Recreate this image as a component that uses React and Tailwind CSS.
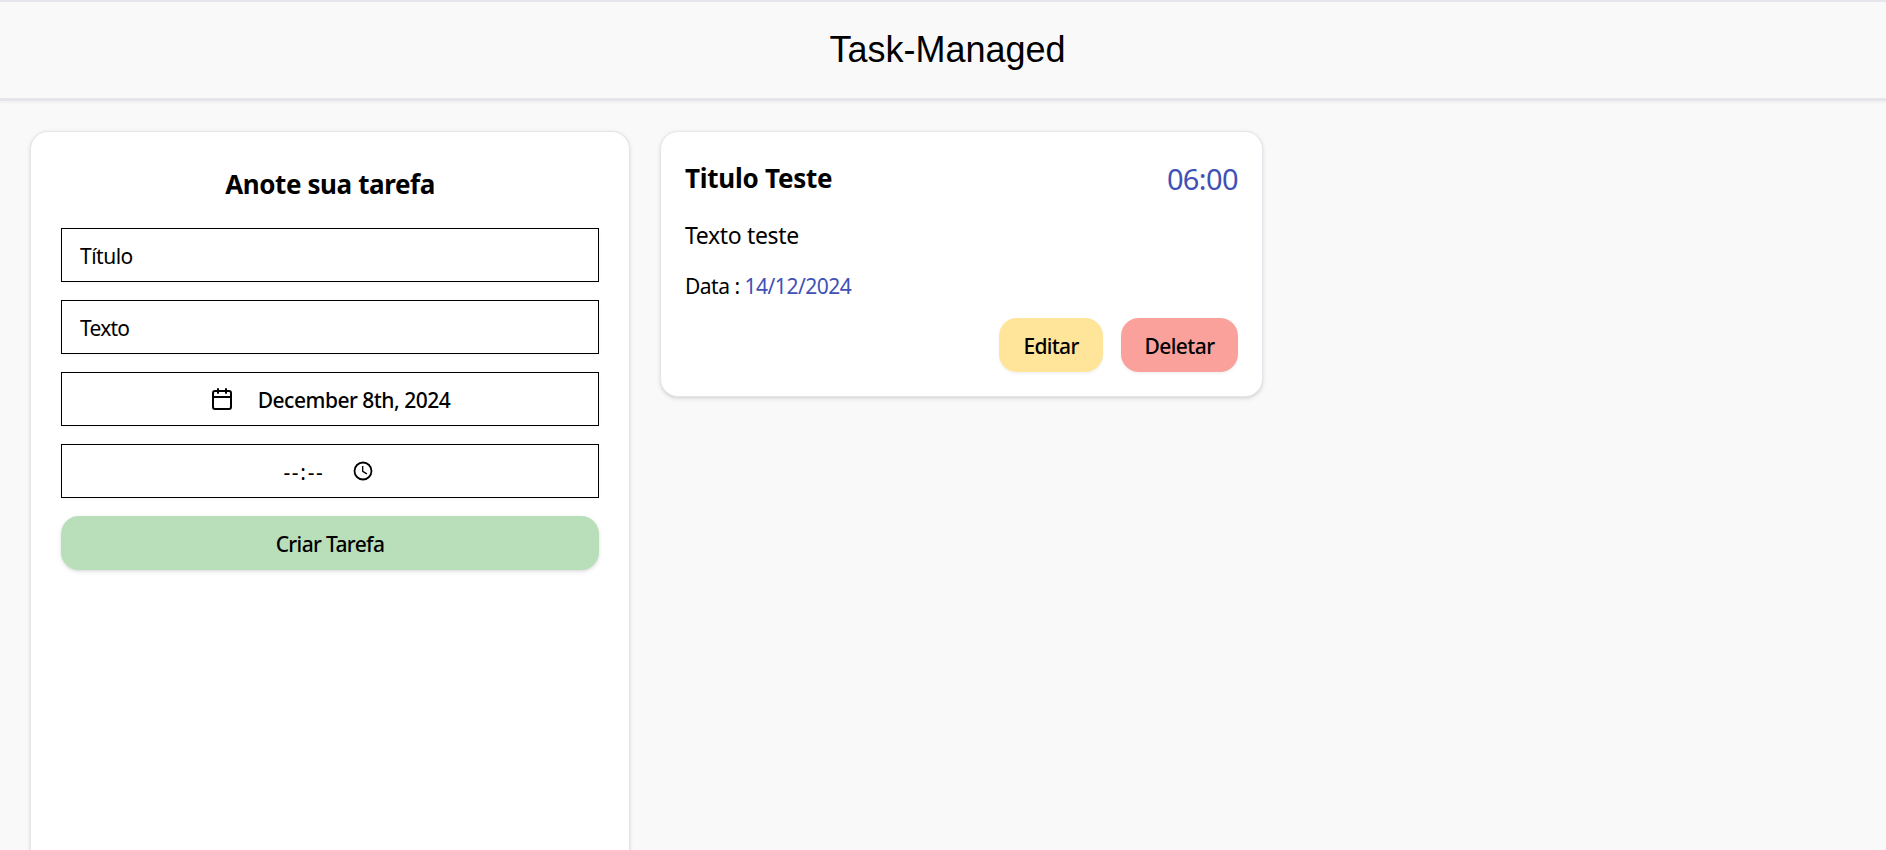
import { Calendar } from "lucide-react";

const field =
  "flex h-[54px] w-full items-center border border-black bg-white text-[21px] shadow-[0_1px_3px_rgba(0,0,0,0.05)]";

function ClockIcon() {
  return (
    <svg width="20" height="20" viewBox="0 0 20 20" fill="none" stroke="black">
      <circle cx="10" cy="10" r="8.5" strokeWidth="1.8" />
      <path d="M9.7 5v5.3l4.2 2.6" strokeWidth="1.3" />
    </svg>
  );
}

function TaskForm() {
  return (
    <section className="flex w-[600px] shrink-0 flex-col gap-[18px] rounded-t-[18px] border border-b-0 border-[#e5e5e7] bg-white px-[30px] pt-[31px] shadow-[0_1.5px_4.5px_rgba(0,0,0,0.1),0_1.5px_3px_-1.5px_rgba(0,0,0,0.1)]">
      <h2 className="mb-[5px] text-center text-[26px] font-bold leading-[42px] tracking-[-0.4px]">
        Anote sua tarefa
      </h2>
      <input
        className={`${field} px-[18px] pt-[2px] tracking-[-0.5px] placeholder:text-black placeholder:opacity-100`}
        placeholder="Título"
      />
      <input
        className={`${field} px-[18px] pt-[2px] tracking-[-0.75px] placeholder:text-black placeholder:opacity-100`}
        placeholder="Texto"
      />
      <button className={`${field} justify-center font-medium tracking-[-0.5px]`}>
        <Calendar size={24} className="mr-[24px] -mt-px" />
        <span className="pt-[4px]">December 8th, 2024</span>
      </button>
      <div className={`${field} justify-center pr-[4px]`}>
        <span className="mr-[28px] pt-[3px] tracking-[1.7px]">--:--</span>
        <ClockIcon />
      </div>
      <button className="h-[54px] rounded-[18px] bg-[#b9dfba] pt-[4px] text-[21px] font-medium tracking-[-0.65px] shadow-[0_1.5px_4.5px_rgba(0,0,0,0.1),0_1.5px_3px_-1.5px_rgba(0,0,0,0.1)]">
        Criar Tarefa
      </button>
    </section>
  );
}

function TaskCard() {
  return (
    <article className="flex h-[266px] w-[603px] shrink-0 flex-col rounded-[18px] border border-[#e5e5eb] bg-white px-[24px] pt-[24px] shadow-[0_1.5px_4.5px_rgba(0,0,0,0.1),0_1.5px_3px_-1.5px_rgba(0,0,0,0.1)]">
      <div className="flex h-[45px] items-center justify-between">
        <h2 className="text-[26px] font-bold tracking-[-0.25px]">Titulo Teste</h2>
        <span className="text-[29px] tracking-[-0.6px] text-[#3f51b5]">06:00</span>
      </div>
      <p className="mt-[16px] text-[23px] leading-[36px] tracking-[-0.35px]">Texto teste</p>
      <p className="mt-[18px] text-[21px] leading-[30px] tracking-[-0.5px]">
        Data : <span className="text-[#3f51b5]">14/12/2024</span>
      </p>
      <div className="mt-[17px] flex justify-end gap-[18px]">
        <button className="h-[54px] w-[104px] rounded-[18px] bg-[#ffe599] pt-[4px] text-[21px] font-medium tracking-[-0.7px] shadow-[0_1.5px_3px_rgba(0,0,0,0.05)]">
          Editar
        </button>
        <button className="h-[54px] w-[117px] rounded-[18px] bg-[#faa19b] pt-[4px] text-[21px] font-medium tracking-[-0.6px] shadow-[0_1.5px_3px_rgba(0,0,0,0.05)]">
          Deletar
        </button>
      </div>
    </article>
  );
}

export default function App() {
  return (
    <div className="flex h-screen flex-col overflow-hidden bg-[#f9f9f9] font-['Noto_Sans',sans-serif] text-black">
      <header className="flex h-[101px] shrink-0 items-center justify-center border-t-2 border-b-3 border-[#e5e5eb] pl-[9px] shadow-[0_1.5px_3px_rgba(0,0,0,0.05)]">
        <h1 className="font-['Liberation_Sans',sans-serif] text-[36px] leading-[54px]">
          Task-Managed
        </h1>
      </header>
      <main className="flex min-h-0 flex-1 items-start gap-[30px] px-[30px] pt-[30px]">
        <div className="flex self-stretch">
          <TaskForm />
        </div>
        <TaskCard />
      </main>
    </div>
  );
}
